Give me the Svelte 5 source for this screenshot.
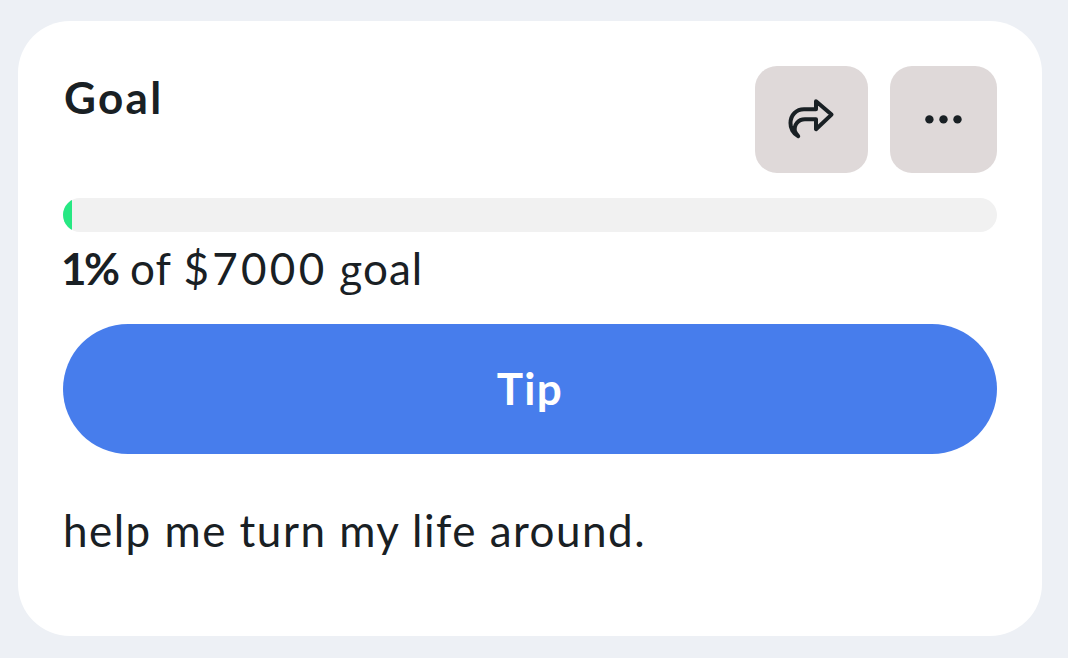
<script>
  export let raised = 70;
  export let goal = 7000;

  $: percent = Math.round((raised / goal) * 100);
</script>

<div class="card">
  <header class="header">
    <h2 class="title">Goal</h2>
    <div class="actions">
      <button class="icon-button share" aria-label="Share">
        <svg width="48" height="44" viewBox="1 1 48 44">
          <path
            d="M29.5 4.2L45 17.6L29.5 32.2V22.2H18.5C11.5 22.2 7 28 8.5 34.5C9.2 36.5 10.5 37.9 11.7 39.2C6.5 36.8 3.8 31 4 26C4.2 17.5 10 12.3 17.5 12.3H29.5Z"
            transform="translate(-0.5 0)"
          />
        </svg>
      </button>
      <button class="icon-button" aria-label="More">
        <svg class="dots" width="40" height="10" viewBox="0 0 40 10">
          <circle cx="5.4" cy="4.4" r="4.2" />
          <circle cx="19.5" cy="4.4" r="4.2" />
          <circle cx="33.5" cy="4.4" r="4.2" />
        </svg>
      </button>
    </div>
  </header>

  <div class="progress">
    <div class="progress-bar" style="width: {percent}%"></div>
  </div>
  <p class="status">
    <b>{percent}%</b> of <span class="amount">${goal}</span>
    <span class="g">g</span>oal
  </p>

  <button class="tip">Tip</button>

  <p class="description">help me turn my life around.</p>
</div>

<style>
  :global(body) {
    background: #edf0f5;
  }

  .card {
    box-sizing: border-box;
    width: 1024px;
    height: 615px;
    margin: 21px 0 22px 18px;
    padding: 45px;
    border-radius: 52px;
    background: #fff;
    color: #192024;
    font-family: Lato, "Liberation Sans", sans-serif;
    font-size: 44px;
    line-height: 60px;
  }

  .header {
    display: flex;
    justify-content: space-between;
    height: 107px;
  }

  .title {
    margin: 1px 0 0 1px;
    font-size: 44px;
    font-weight: 700;
    letter-spacing: 2.3px;
  }

  .actions {
    display: flex;
    gap: 22px;
  }

  button {
    border: none;
    padding: 0;
    font-family: inherit;
    cursor: pointer;
  }

  .icon-button {
    display: flex;
    align-items: center;
    justify-content: center;
    width: 107px;
    height: 107px;
    border-radius: 22px;
    background: #dfd9d9;
  }

  .share {
    width: 113px;
  }

  .icon-button path {
    fill: none;
    stroke: #192024;
    stroke-width: 4;
    stroke-linejoin: round;
  }

  .dots {
    fill: #192024;
  }

  .progress {
    height: 34px;
    margin-top: 25px;
    border-radius: 17px;
    background: #f1f1f1;
    overflow: hidden;
  }

  .progress-bar {
    height: 100%;
    background: #27e883;
  }

  .status {
    height: 60px;
    margin: 6px 0 0;
    letter-spacing: 1px;
    white-space: nowrap;
  }

  .status b {
    margin-left: -2px;
    letter-spacing: -2.4px;
  }

  .amount {
    letter-spacing: 3.3px;
  }

  .g {
    font-family: "Open Sans", sans-serif;
    font-size: 41px;
    line-height: 1;
  }

  .tip {
    display: block;
    width: 100%;
    height: 130px;
    margin-top: 26px;
    padding-bottom: 2px;
    border-radius: 65px;
    background: #477dec;
    color: #fff;
    font-size: 44px;
    font-weight: 700;
    letter-spacing: 1.3px;
  }

  .description {
    margin: 46px 0 0;
    letter-spacing: 1.48px;
    white-space: nowrap;
  }
</style>
